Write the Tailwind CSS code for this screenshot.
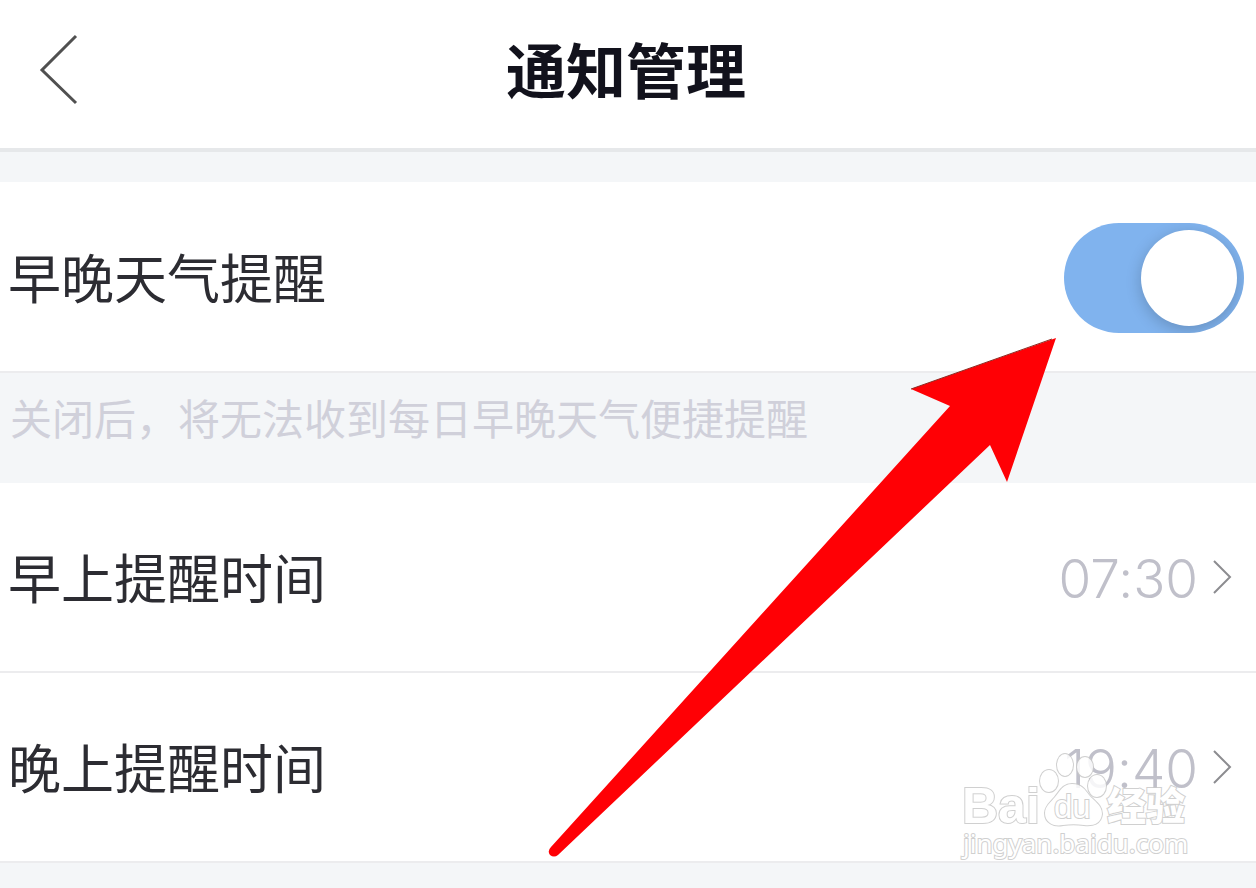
<!DOCTYPE html>
<html lang="zh-CN">
<head>
    <meta charset="UTF-8">
    <meta name="viewport" content="width=device-width, initial-scale=1.0">
    <title>通知管理</title>
    <script src="https://cdn.jsdelivr.net/npm/@tailwindcss/browser@4"></script>
</head>
<body class="bg-[#f4f6f8] font-['Noto_Sans_CJK_SC',sans-serif] text-[#2c2c32]">
    <div class="relative min-h-screen overflow-hidden">
        <!-- Header -->
        <header class="grid grid-cols-[1fr_auto_1fr] items-center h-[152px] pr-1 pb-3 bg-white border-b-4 border-[#e6e8ea]">
            <button type="button" aria-label="返回" class="justify-self-start pl-9 pt-1">
                <svg class="w-11 h-[72px]" viewBox="0 0 44 72" fill="none" stroke="#505050" stroke-width="3">
                    <path d="M40 2 L6 36 L40 69"/>
                </svg>
            </button>
            <h1 class="text-[60px] leading-[80px] font-bold text-[#12121c]">通知管理</h1>
        </header>

        <main class="pt-[30px]">
            <!-- Weather reminder switch -->
            <div class="flex items-center justify-between h-[191px] pl-2 pr-3 bg-white border-b-2 border-[#ececee]">
                <label for="remind" class="pb-0.5 text-[53px] leading-[72px]">早晚天气提醒</label>
                <input id="remind" type="checkbox" role="switch" checked
                    class="appearance-none flex items-center w-[180px] h-[110px] mt-0.5 px-[7px] rounded-full bg-gray-200 overflow-hidden checked:bg-[#80b3ee] checked:justify-end before:w-24 before:h-24 before:rounded-full before:bg-white before:shadow-[0_4px_16px_rgba(0,0,0,0.2)]"/>
            </div>
            <p class="h-[110px] pl-[10px] pt-3.5 text-[42px] leading-[60px] text-[#d0d0da]">关闭后，将无法收到每日早晚天气便捷提醒</p>

            <!-- Reminder times -->
            <ul class="bg-white">
                <li class="border-b-2 border-[#ececee]">
                    <a href="#morning" class="flex items-center justify-between h-[188px] pl-2 pr-6">
                        <span class="pb-0.5 text-[53px] leading-[72px]">早上提醒时间</span>
                        <span class="flex items-center gap-3.5">
                            <span class="pt-1 font-[Inter,sans-serif] [font-feature-settings:'calt'_0] text-[53px] leading-[72px] font-light text-[#c0c0ca]">07:30</span>
                            <svg class="w-5 h-9" viewBox="0 0 20 36" fill="none" stroke="#8c8c90" stroke-width="2">
                                <path d="M2 2 L18 18 L2 34"/>
                            </svg>
                        </span>
                    </a>
                </li>
                <li class="border-b-2 border-[#ececee]">
                    <a href="#evening" class="flex items-center justify-between h-[188px] pl-2 pr-6">
                        <span class="pb-0.5 text-[53px] leading-[72px]">晚上提醒时间</span>
                        <span class="flex items-center gap-3.5">
                            <span class="pt-1 font-[Inter,sans-serif] [font-feature-settings:'calt'_0] text-[53px] leading-[72px] font-light text-[#c0c0ca]">19:40</span>
                            <svg class="w-5 h-9" viewBox="0 0 20 36" fill="none" stroke="#8c8c90" stroke-width="2">
                                <path d="M2 2 L18 18 L2 34"/>
                            </svg>
                        </span>
                    </a>
                </li>
            </ul>
        </main>

        <!-- Arrow pointing at the switch -->
        <svg class="absolute top-[338px] right-[200px] w-[508px] h-[520px] pointer-events-none" viewBox="548 338 508 520" aria-hidden="true">
            <path fill="#ff0005" d="M1056 338 L1007 482 L990 445 L558 855 Q554 858 550 855 Q547 851 551 847 L950 406 L911 389 Z"/>
            <path fill="none" stroke="#8c2a22" stroke-width="1" d="M911 389 L1052 339"/>
        </svg>

        <!-- Watermark -->
        <svg class="absolute top-[748px] right-[56px] w-[244px] h-[116px] pointer-events-none opacity-85" viewBox="956 748 244 116" aria-hidden="true" fill="#ffffff" stroke="#c8c8c8" stroke-width="2" paint-order="stroke">
            <text x="962" y="823" font-size="50" class="font-['Liberation_Sans',sans-serif] font-bold">Bai</text>
            <ellipse cx="1049" cy="781" rx="9" ry="11"/>
            <ellipse cx="1065" cy="765" rx="8" ry="11"/>
            <ellipse cx="1085" cy="767" rx="8" ry="10"/>
            <ellipse cx="1097" cy="786" rx="9" ry="11"/>
            <path d="M1072 784 C1082 784 1085 790 1089 795 C1094 801 1102 805 1102 814 C1101 824 1093 826 1084 825 C1077 824 1070 824 1063 825 C1054 827 1045 823 1045 813 C1045 806 1051 802 1055 797 C1060 791 1063 784 1072 784 Z"/>
            <text x="1054" y="818" font-size="33" class="font-['Liberation_Sans',sans-serif]">du</text>
            <text x="1107" y="820" font-size="39" class="font-['Noto_Sans_CJK_SC',sans-serif] font-black">经验</text>
            <text x="963" y="853" font-size="26" class="font-['Noto_Sans',sans-serif]">jingyan.baidu.com</text>
        </svg>
    </div>
</body>
</html>
